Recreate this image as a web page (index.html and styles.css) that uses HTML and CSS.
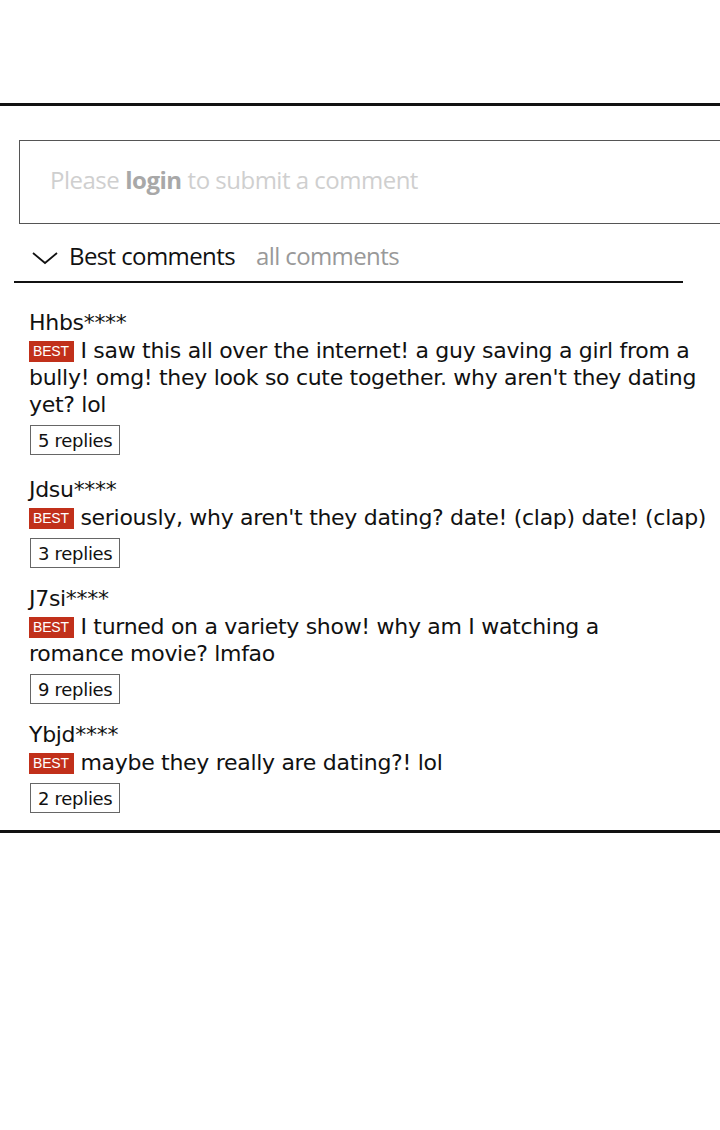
FILE: index.html
```html
<!DOCTYPE html>
<html lang="en">
<head>
  <meta charset="UTF-8">
  <title>Comments</title>
  <link rel="stylesheet" href="styles.css">
</head>
<body>

  <div class="top-rule"></div>

  <div class="login-box">
    Please <strong>login</strong> to submit a comment
  </div>

  <div class="tabs">
    <svg class="chevron" width="26" height="14" viewBox="0 0 26 14">
      <polyline points="1,2 13,12 25,2" fill="none" stroke="#111" stroke-width="1.8"/>
    </svg>
    <span class="tab active">Best comments</span>
    <span class="tab">all comments</span>
  </div>

  <div class="comments">
    <div class="comment">
      <div class="user">Hhbs****</div>
      <div class="text"><span class="best">BEST</span> I saw this all over the internet! a guy saving a girl from a bully! omg! they look so cute together. why aren't they dating yet? lol</div>
      <button class="replies">5 replies</button>
    </div>

    <div class="comment">
      <div class="user">Jdsu****</div>
      <div class="text"><span class="best">BEST</span> seriously, why aren't they dating? date! (clap) date! (clap)</div>
      <button class="replies">3 replies</button>
    </div>

    <div class="comment">
      <div class="user">J7si****</div>
      <div class="text"><span class="best">BEST</span> I turned on a variety show! why am I watching a<br>romance movie? lmfao</div>
      <button class="replies">9 replies</button>
    </div>

    <div class="comment">
      <div class="user">Ybjd****</div>
      <div class="text"><span class="best">BEST</span> maybe they really are dating?! lol</div>
      <button class="replies">2 replies</button>
    </div>
  </div>

  <div class="bottom-rule"></div>

</body>
</html>
```

FILE: styles.css
```css
body {
  margin: 0;
  background: #fff;
  font-family: 'DejaVu Sans', sans-serif;
  color: #111;
  overflow-x: hidden;
}

.top-rule {
  margin-top: 103px;
  height: 3px;
  background: #111;
}

.login-box {
  margin: 34px -10px 0 19px;
  height: 84px;
  border: 1px solid #555;
  padding-left: 30px;
  display: flex;
  align-items: center;
  padding-bottom: 6px;
  box-sizing: border-box;
  font-family: 'Open Sans', sans-serif;
  font-size: 24px;
  letter-spacing: -0.5px;
  color: #cfcfcf;
}

.login-box strong {
  color: #a8a8a8;
  margin: 0 6px;
}

.tabs {
  display: flex;
  align-items: center;
  margin: 12px 0 0 14px;
  width: 669px;
  height: 47px;
  padding-left: 18px;
  padding-bottom: 6px;
  box-sizing: border-box;
  border-bottom: 2px solid #111;
  font-family: 'Open Sans', sans-serif;
  font-size: 24px;
  letter-spacing: -0.6px;
}

.chevron {
  margin-right: 11px;
  margin-top: 4px;
}

.tab {
  color: #999;
  margin-right: 21px;
}

.tab.active {
  color: #111;
}

.comments {
  padding: 26px 0 0 29px;
}

.comment {
  margin-bottom: 17px;
}

.comment:first-child {
  margin-bottom: 21px;
}

.user {
  font-size: 22px;
  line-height: 28px;
  letter-spacing: -0.3px;
}

.text {
  font-size: 22px;
  line-height: 27px;
  letter-spacing: -0.3px;
  max-width: 680px;
}

.best {
  display: inline-block;
  background: #c1301a;
  color: #fff;
  font-family: 'Liberation Sans', sans-serif;
  font-size: 14px;
  line-height: 21px;
  padding: 0 5px 0 4px;
  vertical-align: 2px;
  letter-spacing: -0.2px;
}

.replies {
  margin-top: 7px;
  margin-left: 1px;
  padding: 0 7px;
  height: 30px;
  font-family: inherit;
  font-size: 18px;
  letter-spacing: -0.3px;
  color: #111;
  background: #fff;
  border: 1px solid #666;
  border-radius: 0;
}

.bottom-rule {
  height: 3px;
  background: #111;
}
```
